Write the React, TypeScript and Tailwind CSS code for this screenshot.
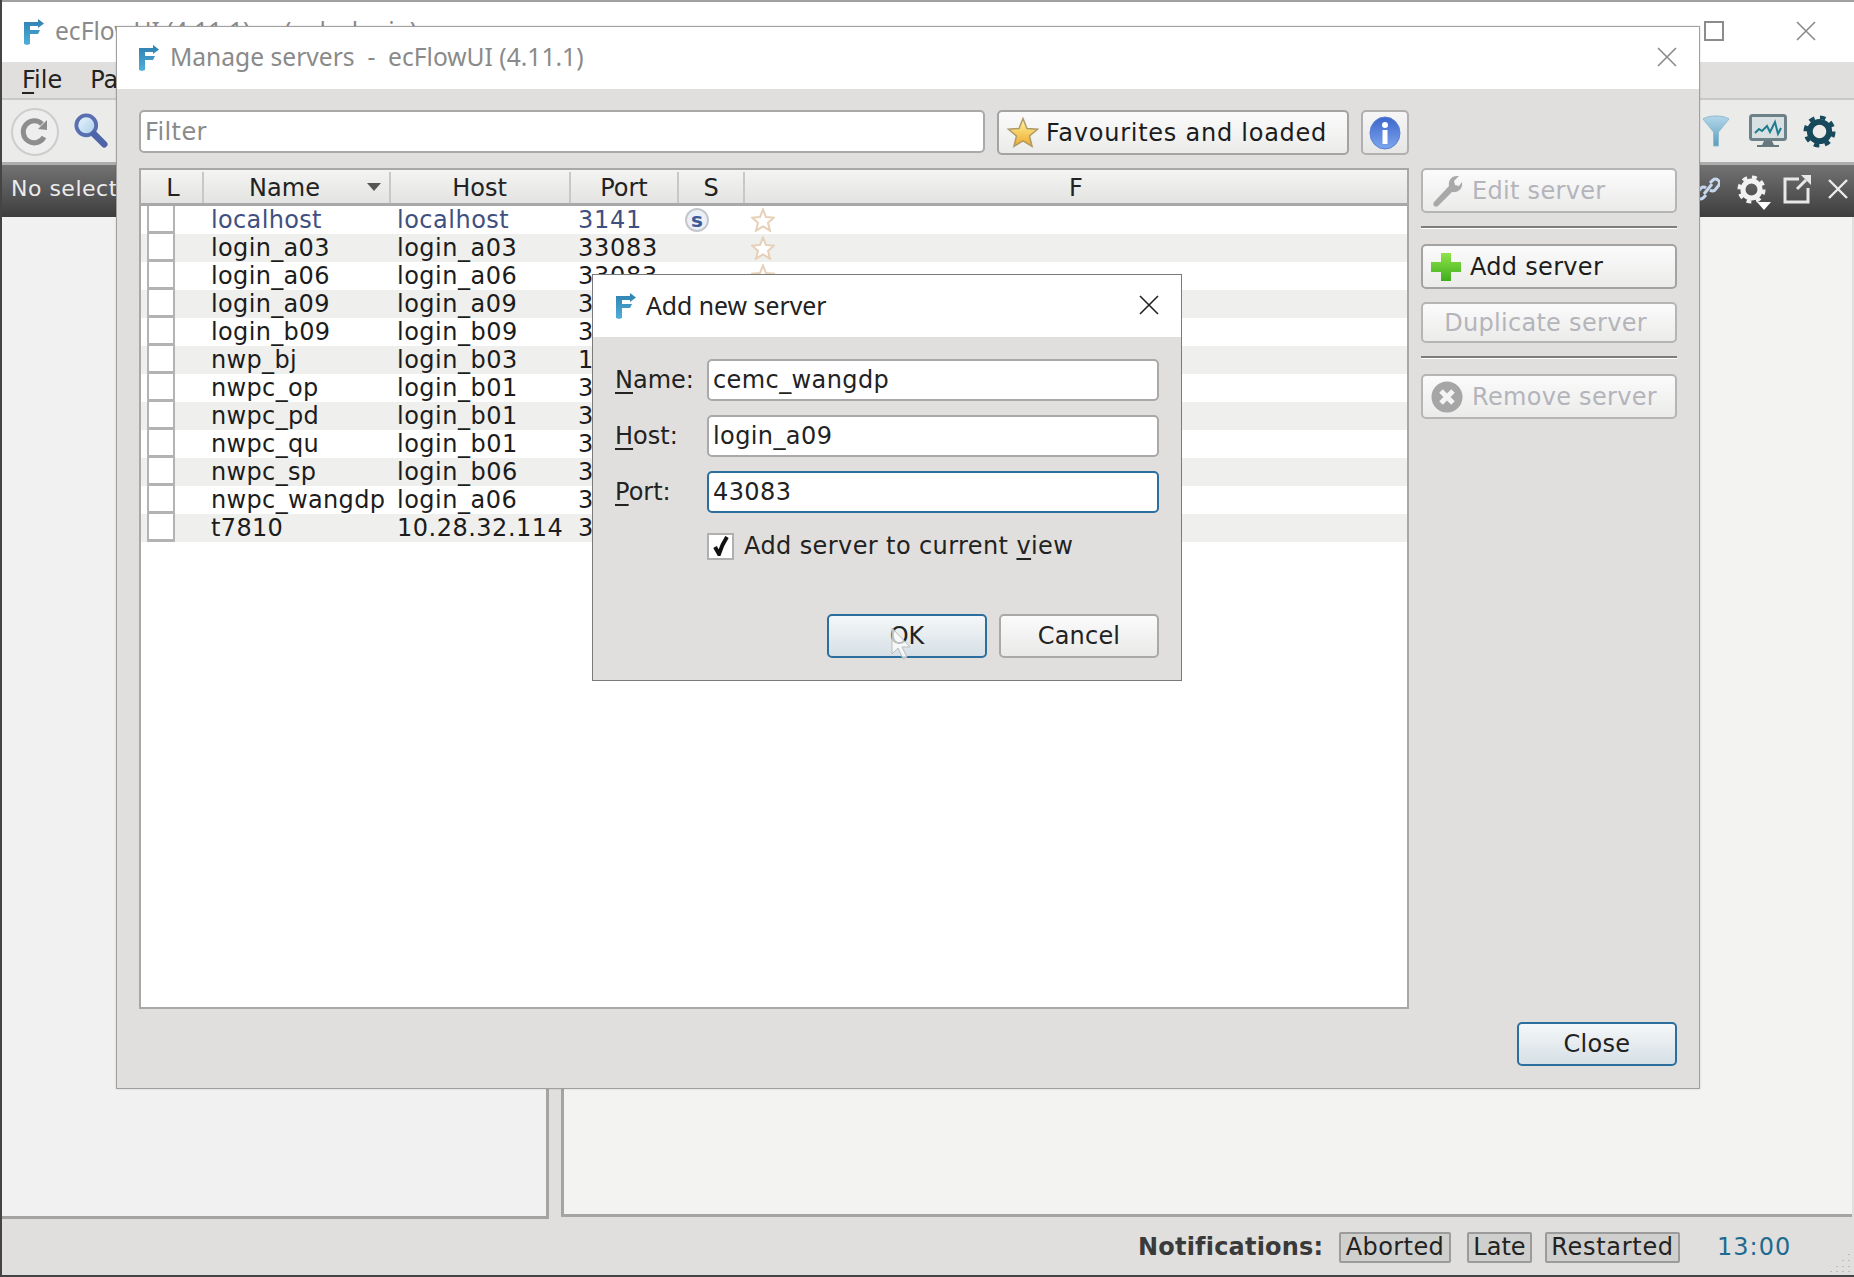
const servers = [
  { name: 'localhost', host: 'localhost', port: '3141', local: true },
  { name: 'login_a03', host: 'login_a03', port: '33083' },
  { name: 'login_a06', host: 'login_a06', port: '33083' },
  { name: 'login_a09', host: 'login_a09', port: '33083' },
  { name: 'login_b09', host: 'login_b09', port: '33083' },
  { name: 'nwp_bj', host: 'login_b03', port: '13083' },
  { name: 'nwpc_op', host: 'login_b01', port: '31071' },
  { name: 'nwpc_pd', host: 'login_b01', port: '31072' },
  { name: 'nwpc_qu', host: 'login_b01', port: '31067' },
  { name: 'nwpc_sp', host: 'login_b06', port: '31085' },
  { name: 'nwpc_wangdp', host: 'login_a06', port: '33083' },
  { name: 't7810', host: '10.28.32.114', port: '31415' },
];

function Logo({ id }: { id: string }) {
  return (
    <svg width="22" height="27" viewBox="0 0 22 27">
      <defs>
        <linearGradient id={id} x1="0" y1="0" x2="0" y2="1">
          <stop offset="0" stopColor="#2f7fb0" />
          <stop offset="1" stopColor="#4fb0d8" />
        </linearGradient>
      </defs>
      <path
        d="M1 4h14V1l6 4.500-6 4.500V8H7v4h10l-2 4H7v10l-3 1-3-1z"
        fill={`url(#${id})`}
      />
    </svg>
  );
}

function CloseX({ size, color, width = 1.6 }: { size: number; color: string; width?: number }) {
  return (
    <svg width={size} height={size} viewBox="0 0 20 20">
      <path d="M1 1l18 18M19 1L1 19" stroke={color} strokeWidth={width} fill="none" />
    </svg>
  );
}

function Gear({ size, color }: { size: number; color: string }) {
  return (
    <svg width={size} height={size} viewBox="0 0 34 34">
      <circle cx="17" cy="17" r="10" fill="none" stroke={color} strokeWidth="6" />
      <circle cx="17" cy="17" r="14.500" fill="none" stroke={color} strokeWidth="4" strokeDasharray="5.700 5.700" />
    </svg>
  );
}

function StarOutline() {
  return (
    <svg width="24" height="24" viewBox="0 0 24 24">
      <path
        d="M12 1.500l3 7.500 8 .6-6 5.200 2 7.900-7-4.300-7 4.300 2-7.900-6-5.200 8-.6z"
        fill="#fff"
        stroke="#e6d0b6"
        strokeWidth="2"
      />
    </svg>
  );
}

function FormRow({ label, hot, value, focus }: { label: string; hot: string; value: string; focus?: boolean }) {
  return (
    <div className="flex items-center h-[42px]">
      <span className="w-[92px] text-[#222]">
        <span className="underline underline-offset-[4px]">{hot}</span>
        {label}
      </span>
      <div
        className={`flex-1 h-full flex items-center px-[4px] tracking-[0.4px] bg-white rounded-[5px] border-2 ${focus ? 'border-[#2a6f9e]' : 'border-[#a9a9a9]'}`}
      >
        {value}
      </div>
    </div>
  );
}

function SideButton({
  children,
  icon,
  disabled,
  height,
  center,
}: {
  children: string;
  icon?: React.ReactNode;
  disabled?: boolean;
  height: string;
  center?: boolean;
}) {
  return (
    <div
      className={`${height} flex items-center gap-[9px] pt-[1px] tracking-[0.3px] rounded-[5px] border-2 bg-linear-to-b from-[#fbfbfb] to-[#ebebea] ${disabled ? 'border-[#b5b5b5] text-[#b4b4bb]' : 'border-[#a3a3a3] text-[#1c1c1c]'} ${center ? 'justify-center pr-[7px]' : 'pl-[8px]'}`}
    >
      {icon}
      {children}
    </div>
  );
}

export default function App() {
  return (
    <div className="relative w-[1854px] h-[1277px] overflow-hidden flex flex-col bg-[#e0dfdd] border-l-2 border-b-2 border-[#444] text-[24px] leading-none text-[#1c1c1c] font-['DejaVu_Sans',sans-serif]">
      {/* Main window behind the dialogs */}
      <div className="h-[62px] shrink-0 bg-white border-t-2 border-[#a0a0a0] flex items-center pl-[21px] pr-[38px] pb-[2px]">
        <Logo id="logoMain" />
        <span className="ml-[10px] font-['Noto_Sans',sans-serif] text-[24.6px] text-[#8a8a8a]">ecFlowUI (4.11.1) &nbsp;-&nbsp; (wdp_login)</span>
        <div className="ml-auto flex items-center gap-[72px]">
          <div className="w-[20px] h-[20px] border-2 border-[#8c8c8c]" />
          <CloseX size={20} color="#8a8a8a" />
        </div>
      </div>
      <div className="h-[38px] shrink-0 flex items-center gap-[28px] pl-[20px] border-b-2 border-[#c9c9c7] text-[#222]">
        <span>
          <span className="underline underline-offset-[4px]">F</span>ile
        </span>
        <span>Panels</span>
      </div>
      <div className="h-[65px] shrink-0 flex items-center bg-[#ebebe9] border-b-[3px] border-[#aeaeae] pl-[8px] pr-[18px]">
        <svg className="translate-y-[1px]" width="50" height="50" viewBox="0 0 50 50">
          <circle cx="25" cy="25" r="23" fill="#eee" stroke="#cdcdcd" strokeWidth="2" />
          <path d="M32 17a11 11 0 1 0 2 13" fill="none" stroke="#8d8d8d" strokeWidth="5" />
          <path d="M28 22l9 1V13z" fill="#8d8d8d" />
        </svg>
        <svg className="ml-[14px]" width="34" height="38" viewBox="0 0 36 38">
          <defs>
            <linearGradient id="lens" x1="0" y1="0" x2="1" y2="1">
              <stop offset="0" stopColor="#eef6fc" />
              <stop offset="1" stopColor="#a8cdea" />
            </linearGradient>
          </defs>
          <circle cx="13" cy="13" r="10.500" fill="url(#lens)" stroke="#5a6fb0" strokeWidth="4" />
          <path d="M21 22l11 11" stroke="#4d65a8" strokeWidth="7" strokeLinecap="round" />
        </svg>
        <div className="ml-auto flex items-center">
          <svg width="28" height="32" viewBox="0 0 28 32">
            <defs>
              <linearGradient id="funnel" x1="0" y1="0" x2="0" y2="1">
                <stop offset="0" stopColor="#b4d8ea" />
                <stop offset="1" stopColor="#5a9cbc" />
              </linearGradient>
            </defs>
            <path d="M1 4c5-4 21-4 26 0L16.500 17v14h-5V17z" fill="url(#funnel)" stroke="#8fbcd0" />
          </svg>
          <svg className="ml-[19px]" width="38" height="34" viewBox="0 0 38 34">
            <rect x="1.500" y="1.500" width="35" height="24" rx="2" fill="#d9e0e2" stroke="#6c8288" strokeWidth="3" />
            <path d="M6 19l4-4 3 2 5-5 3 6 5-10 3 12 3-6" fill="none" stroke="#1d7d90" strokeWidth="2" />
            <path d="M15 27h8l2 4h5v2H8v-2h5z" fill="#65787d" />
          </svg>
          <div className="ml-[16px]">
            <Gear size={33} color="#17495c" />
          </div>
        </div>
      </div>
      <div className="h-[52px] shrink-0 flex items-center bg-linear-to-b from-[#737373] to-[#3e3e3e] pl-[9px] pr-[6px] pb-[4px] text-[#ececec] text-[22px] tracking-[0.5px]">
        No selection
        <div className="ml-auto flex items-center">
          <svg width="24" height="30" viewBox="0 0 24 30">
            <path
              d="M10 21l-3 3a4 4 0 0 1-6-5l4-5a4 4 0 0 1 5 0M14 9l3-3a4 4 0 0 1 6 5l-4 5a4 4 0 0 1-5 0M8 20l8-10"
              fill="none"
              stroke="#c5d8ee"
              strokeWidth="3"
            />
          </svg>
          <div className="relative ml-[17px]">
            <Gear size={29} color="#f2f2f2" />
            <div className="absolute left-[20px] top-[27px] w-0 h-0 border-x-[7px] border-x-transparent border-t-[8px] border-t-white" />
          </div>
          <svg className="ml-[16px]" width="30" height="30" viewBox="0 0 30 30">
            <path d="M17 5H3v23h23V14" fill="none" stroke="#e8e8e8" strokeWidth="3" />
            <path d="M15 15l9-9" stroke="#e8e8e8" strokeWidth="3" />
            <path d="M19 1h10v10z" fill="#e8e8e8" />
          </svg>
          <div className="ml-[16px]">
            <CloseX size={20} color="#ececec" width={2.4} />
          </div>
        </div>
      </div>
      <div className="flex-1 flex gap-[12px]">
        <div className="w-[547px] bg-[#f1f1f1] border-r-[3px] border-b-[3px] border-[#a4a4a4]" />
        <div className="flex-1 mb-[2px] mr-[2px] bg-[#f3f3f1] border-l-[3px] border-b-[3px] border-[#a4a4a4]" />
      </div>
      <div className="relative h-[56px] shrink-0 flex items-center pl-[1136px] text-[#222]">
        <span className="w-[201px] font-bold tracking-[0.2px] text-[#3a3a3a]">Notifications:</span>
        <span className="w-[112px] h-[31px] flex items-center justify-center tracking-[0.4px] bg-[#cfcfcd] border-2 border-[#9b9b9b] rounded-[2px]">Aborted</span>
        <span className="ml-[16px] w-[65px] h-[31px] flex items-center justify-center bg-[#cfcfcd] border-2 border-[#9b9b9b] rounded-[2px]">Late</span>
        <span className="ml-[13px] w-[135px] h-[31px] flex items-center justify-center tracking-[0.7px] bg-[#cfcfcd] border-2 border-[#9b9b9b] rounded-[2px]">Restarted</span>
        <span className="ml-[37px] tracking-[1px] text-[#1f6b8f]">13:00</span>
        <svg className="absolute right-[2px] bottom-[2px]" width="22" height="22" viewBox="0 0 22 22">
          <path d="M19 3v1M13 9v1M19 9v1M7 15v1M13 15v1M19 15v1M1 20v1M7 20v1M13 20v1M19 20v1" stroke="#bcbcbc" strokeWidth="2" />
        </svg>
      </div>

      {/* Manage servers window */}
      <div className="absolute left-[114px] top-[26px] w-[1584px] h-[1063px] flex flex-col bg-[#e0dfdd] border border-[#a0a0a0] shadow-[0_0_2px_rgba(0,0,0,0.15)]">
        <div className="h-[62px] shrink-0 bg-white flex items-center pl-[21px] pr-[22px] pb-[2px]">
          <Logo id="logoManage" />
          <span className="ml-[10px] font-['Noto_Sans',sans-serif] text-[24.6px] text-[#8a8a8a]">Manage servers &nbsp;-&nbsp; ecFlowUI (4.11.1)</span>
          <div className="ml-auto">
            <CloseX size={20} color="#8a8a8a" />
          </div>
        </div>
        <div className="flex-1 flex flex-col pt-[21px] pl-[22px] pr-[22px]">
          <div className="flex items-start">
            <div className="w-[846px] h-[43px] flex items-center px-[4px] tracking-[0.4px] bg-white rounded-[5px] border-2 border-[#a9a9a9] text-[#8a8a8a]">
              Filter
            </div>
            <div className="ml-[12px] w-[352px] h-[45px] flex items-center gap-[7px] pl-[8px] tracking-[0.75px] rounded-[5px] border-2 border-[#a3a3a3] bg-linear-to-b from-[#fbfbfb] to-[#ebebea]">
              <svg width="32" height="32" viewBox="0 0 32 32">
                <defs>
                  <linearGradient id="fav" x1="0" y1="0" x2="0" y2="1">
                    <stop offset="0" stopColor="#fff6a0" />
                    <stop offset="1" stopColor="#eda928" />
                  </linearGradient>
                </defs>
                <path
                  d="M16 1.500l4 10 10.500.7-8 6.800 2.600 10.500-9.100-5.600-9.100 5.600L9.500 19l-8-6.800L12 11.500z"
                  fill="url(#fav)"
                  stroke="#b09a6a"
                  strokeWidth="1.500"
                />
              </svg>
              Favourites and loaded
            </div>
            <div className="ml-[12px] w-[48px] h-[45px] flex items-center justify-center rounded-[5px] border-2 border-[#b0b0b0] bg-linear-to-b from-[#f6f6f6] to-[#e6e6e5]">
              <svg width="32" height="34" viewBox="0 0 32 34">
                <defs>
                  <linearGradient id="info" x1="0" y1="0" x2="0" y2="1">
                    <stop offset="0" stopColor="#3c66cc" />
                    <stop offset="1" stopColor="#7ea6ee" />
                  </linearGradient>
                </defs>
                <ellipse cx="16" cy="17" rx="15" ry="16" fill="url(#info)" stroke="#5a80d0" />
                <circle cx="16" cy="9" r="3" fill="#fff" />
                <rect x="13.500" y="14" width="5" height="14" fill="#fff" />
              </svg>
            </div>
          </div>
          <div className="flex-1 flex mt-[13px] pb-[79px]">
            {/* Server table */}
            <div className="w-[1270px] flex flex-col bg-white border-2 border-[#a8a8a8]">
              <div className="h-[36px] shrink-0 grid grid-cols-[63px_187px_180px_108px_66px_1fr] bg-linear-to-b from-[#f4f4f3] to-[#e3e3e1] border-b-[3px] border-[#a8a8a8] pt-[2px] text-[#222]">
                <div className="flex items-center justify-center pl-[3px] border-r-2 border-[#c8c8c8]">L</div>
                <div className="relative flex items-center justify-center pr-[24px] border-r-2 border-[#c8c8c8]">
                  Name
                  <div className="absolute right-[8px] top-[11px] w-0 h-0 border-x-[7px] border-x-transparent border-t-[8px] border-t-[#555]" />
                </div>
                <div className="flex items-center justify-center pr-[1px] border-r-2 border-[#c8c8c8]">Host</div>
                <div className="flex items-center justify-center border-r-2 border-[#c8c8c8]">Port</div>
                <div className="flex items-center justify-center border-r-2 border-[#c8c8c8]">S</div>
                <div className="flex items-center justify-center">F</div>
              </div>
              {servers.map((s, i) => (
                <div
                  key={s.name}
                  className={`h-[28px] shrink-0 grid grid-cols-[63px_187px_180px_108px_66px_1fr] ${i % 2 ? 'bg-[#efefed]' : 'bg-white'} ${s.local ? 'text-[#3f5080]' : ''}`}
                >
                  <div className="pl-[6px]">
                    <div className="w-[28px] h-[28px] bg-white border-x-2 border-b-[3px] border-[#b3b3b3]" />
                  </div>
                  <div className="pl-[7px] flex items-center whitespace-nowrap tracking-[0.35px]">{s.name}</div>
                  <div className="pl-[6px] flex items-center whitespace-nowrap tracking-[0.5px]">{s.host}</div>
                  <div className="pl-[7px] flex items-center tracking-[0.7px]">{s.port}</div>
                  <div className="pl-[6px] flex items-center">
                    {s.local && (
                      <div className="w-[24px] h-[24px] flex items-center justify-center rounded-full bg-[#eaf0f6] border-2 border-[#c4c8cc] text-[20px] font-bold text-[#3a5a98]">
                        s
                      </div>
                    )}
                  </div>
                  <div className="pl-[6px] flex items-center">
                    <StarOutline />
                  </div>
                </div>
              ))}
            </div>
            {/* Action buttons */}
            <div className="w-[256px] ml-[12px] flex flex-col">
              <SideButton
                disabled
                height="h-[45px]"
                icon={
                  <svg width="32" height="34" viewBox="0 0 32 34">
                    <path
                      d="M3 28L18 12c-1-5 2-10 8-10l2 0-5 5 1 4 4 1 3-4c1 7-4 11-10 10L7 32c-3 2-6-1-4-4z"
                      fill="#a9a9a9"
                    />
                  </svg>
                }
              >
                Edit server
              </SideButton>
              <div className="mt-[13px] mb-[15px] h-[3px] border-t-2 border-[#7d7d7d] border-b border-b-white" />
              <SideButton
                height="h-[45px]"
                icon={
                  <svg width="30" height="30" viewBox="0 0 30 30">
                    <defs>
                      <linearGradient id="plus" x1="0" y1="0" x2="0" y2="1">
                        <stop offset="0" stopColor="#8fe34a" />
                        <stop offset="1" stopColor="#3fae1c" />
                      </linearGradient>
                    </defs>
                    <path d="M10 1h10v9h10v10H20v9H10v-9H0V10h10z" fill="url(#plus)" />
                  </svg>
                }
              >
                Add server
              </SideButton>
              <div className="h-[13px] shrink-0" />
              <SideButton disabled center height="h-[41px]">
                Duplicate server
              </SideButton>
              <div className="mt-[13px] mb-[15px] h-[3px] border-t-2 border-[#7d7d7d] border-b border-b-white" />
              <SideButton
                disabled
                height="h-[45px]"
                icon={
                  <svg width="32" height="32" viewBox="0 0 32 32">
                    <circle cx="16" cy="16" r="15.500" fill="#a6a6a6" />
                    <path d="M10 10l12 12M22 10L10 22" stroke="#f4f4f4" strokeWidth="5" />
                  </svg>
                }
              >
                Remove server
              </SideButton>
              <div className="mt-auto w-[160px] h-[44px] self-end translate-y-[57px] flex items-center justify-center tracking-[0.3px] rounded-[5px] border-2 border-[#2a6f9e] bg-linear-to-b from-[#f5f7f8] to-[#d6e0e6] text-[#222]">
                Close
              </div>
            </div>
          </div>
        </div>

        {/* Add new server dialog */}
        <div className="absolute left-[475px] top-[247px] w-[590px] h-[407px] flex flex-col bg-[#e0dfdd] border border-[#7a7a7a]">
          <div className="h-[62px] shrink-0 bg-white flex items-center pl-[22px] pr-[22px] pb-[2px]">
            <Logo id="logoAdd" />
            <span className="ml-[9px] font-['Noto_Sans',sans-serif] text-[24.8px] text-[#222]">Add new server</span>
            <div className="ml-auto">
              <CloseX size={20} color="#222" />
            </div>
          </div>
          <div className="flex-1 flex flex-col pl-[22px] pr-[22px] pt-[22px] text-[#222]">
            <div className="flex flex-col gap-[14px]">
              <FormRow hot="N" label="ame:" value="cemc_wangdp" />
              <FormRow hot="H" label="ost:" value="login_a09" />
              <FormRow hot="P" label="ort:" value="43083" focus />
            </div>
            <div className="flex items-center mt-[19px] ml-[92px] h-[28px]">
              <div className="w-[27px] h-[27px] flex items-center justify-center bg-white border-2 border-[#b0b0b0]">
                <svg width="16" height="20" viewBox="0 0 16 20">
                  <path d="M2 11l4 7c2-6 4-11 8-17" fill="none" stroke="#111" strokeWidth="4" />
                </svg>
              </div>
              <span className="ml-[10px] tracking-[0.4px]">
                Add server to current <span className="underline underline-offset-[4px]">v</span>iew
              </span>
            </div>
            <div className="flex gap-[12px] justify-end mt-[54px]">
              <div className="relative w-[160px] h-[44px] flex items-center justify-center rounded-[5px] border-2 border-[#2a6f9e] bg-linear-to-b from-[#f5f7f8] to-[#d6e0e6]">
                OK
                <svg className="absolute left-[62px] top-[11px]" width="20" height="34" viewBox="0 0 20 34">
                  <path d="M1 1v26l6-6 5 11 4-2-5-10h8z" fill="#fff" fillOpacity="0.7" stroke="#bbb" />
                </svg>
              </div>
              <div className="w-[160px] h-[44px] flex items-center justify-center tracking-[0.2px] rounded-[5px] border-2 border-[#a9a9a9] bg-linear-to-b from-[#fbfbfb] to-[#e9e9e8]">
                Cancel
              </div>
            </div>
          </div>
        </div>
      </div>
    </div>
  );
}
